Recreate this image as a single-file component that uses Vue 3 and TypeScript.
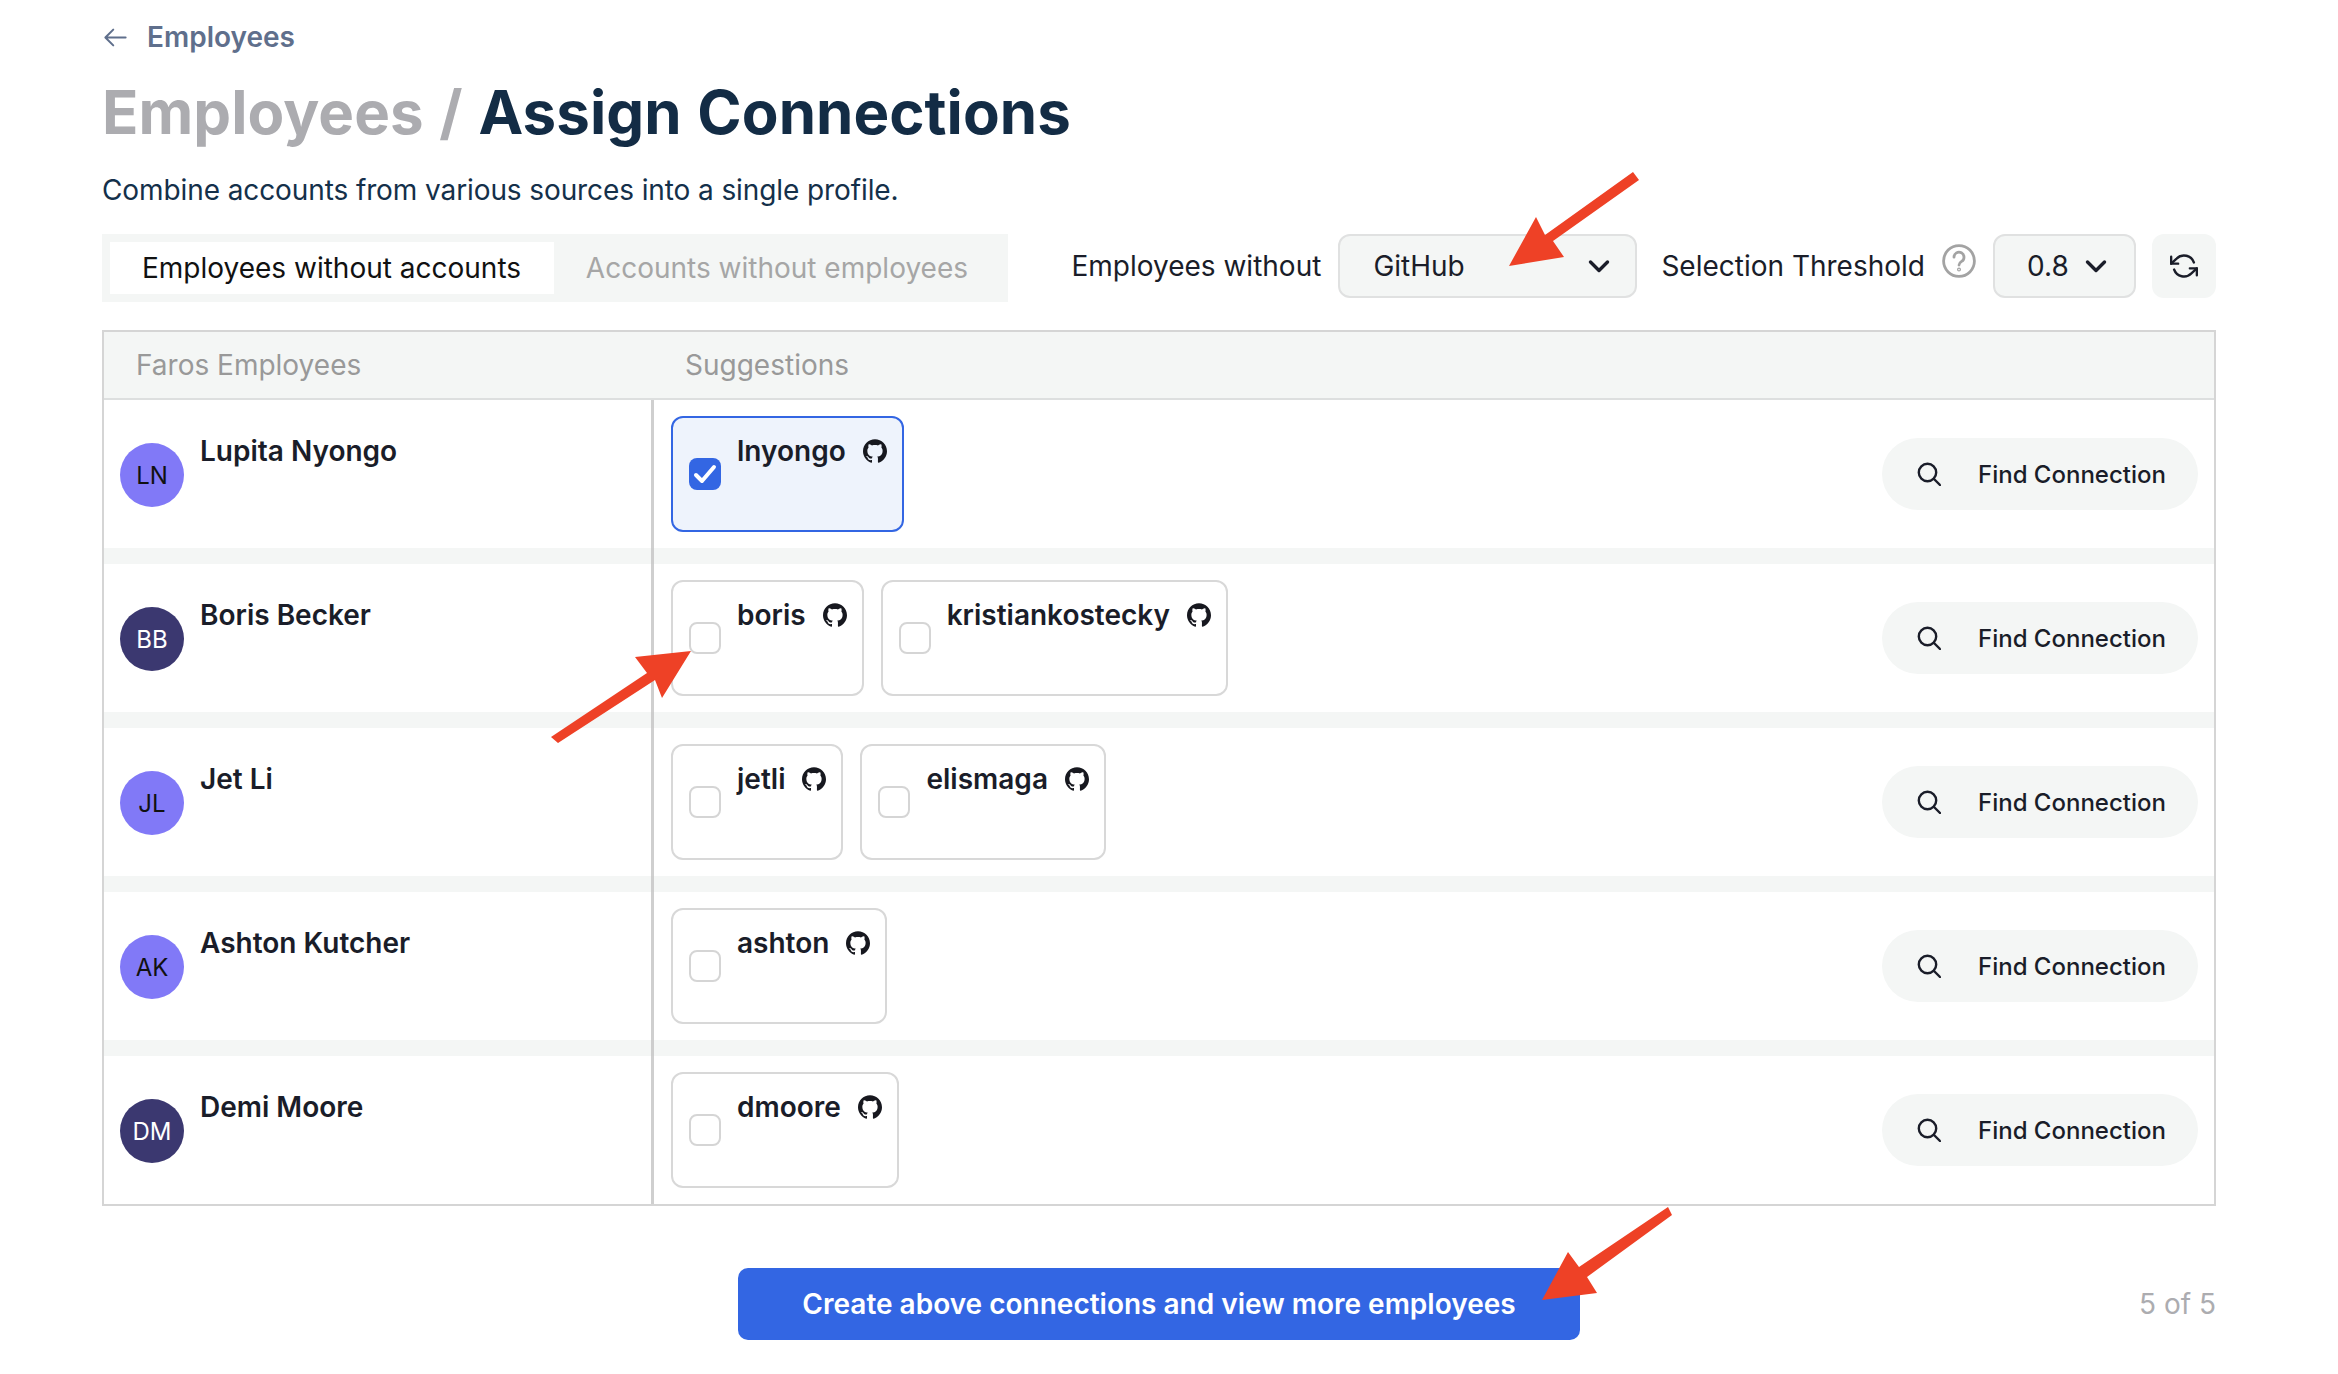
<script setup lang="ts">
interface Suggestion { name: string; checked?: boolean }
interface Employee { initials: string; name: string; dark: boolean; suggestions: Suggestion[] }

const employees: Employee[] = [
  { initials: 'LN', name: 'Lupita Nyongo', dark: false, suggestions: [{ name: 'lnyongo', checked: true }] },
  { initials: 'BB', name: 'Boris Becker', dark: true, suggestions: [{ name: 'boris' }, { name: 'kristiankostecky' }] },
  { initials: 'JL', name: 'Jet Li', dark: false, suggestions: [{ name: 'jetli' }, { name: 'elismaga' }] },
  { initials: 'AK', name: 'Ashton Kutcher', dark: false, suggestions: [{ name: 'ashton' }] },
  { initials: 'DM', name: 'Demi Moore', dark: true, suggestions: [{ name: 'dmoore' }] },
]

const github = 'M12 .297c-6.63 0-12 5.373-12 12 0 5.303 3.438 9.8 8.205 11.385.6.113.82-.258.82-.577 0-.285-.01-1.04-.015-2.04-3.338.724-4.042-1.61-4.042-1.61C4.422 18.07 3.633 17.7 3.633 17.7c-1.087-.744.084-.729.084-.729 1.205.084 1.838 1.236 1.838 1.236 1.07 1.835 2.809 1.305 3.495.998.108-.776.417-1.305.76-1.605-2.665-.3-5.466-1.332-5.466-5.93 0-1.31.465-2.38 1.235-3.22-.135-.303-.54-1.523.105-3.176 0 0 1.005-.322 3.3 1.23.96-.267 1.98-.399 3-.405 1.02.006 2.04.138 3 .405 2.28-1.552 3.285-1.23 3.285-1.23.645 1.653.24 2.873.12 3.176.765.84 1.23 1.91 1.23 3.22 0 4.61-2.805 5.625-5.475 5.92.42.36.81 1.096.81 2.22 0 1.606-.015 2.896-.015 3.286 0 .315.21.69.825.57C20.565 22.092 24 17.592 24 12.297c0-6.627-5.373-12-12-12'
</script>

<template>
  <div class="page">
    <a class="back">
      <svg class="back-icon" viewBox="0 0 24 24" fill="none" stroke="currentColor" stroke-width="1.8" stroke-linecap="round" stroke-linejoin="round"><path d="M21 12H4M10 5l-7 7 7 7" /></svg>
      <span>Employees</span>
    </a>
    <h1 class="title"><span class="crumb">Employees / </span>Assign Connections</h1>
    <p class="sub">Combine accounts from various sources into a single profile.</p>

    <div class="toolbar">
      <div class="tabs">
        <div class="tab active">Employees without accounts</div>
        <div class="tab">Accounts without employees</div>
      </div>
      <div class="controls">
        <span class="label">Employees without</span>
        <div class="select source">
          <span>GitHub</span>
          <svg class="chev" viewBox="0 0 24 24" fill="none" stroke="currentColor" stroke-width="3.4" stroke-linecap="round" stroke-linejoin="round"><path d="M3.5 8l8.5 8.5L20.500 8" /></svg>
        </div>
        <span class="label threshold">Selection Threshold</span>
        <svg class="help" viewBox="0 0 34 34" fill="none" stroke="#a3a3a3" stroke-width="2.8" stroke-linecap="round"><circle cx="17" cy="17" r="15.4" /><path d="M12 13.2a5 5 0 1 1 7.6 4.2c-1.6 1-2.6 1.9-2.6 3.6" /><circle cx="17" cy="25.6" r=".6" /></svg>
        <div class="select value">
          <span>0.8</span>
          <svg class="chev" viewBox="0 0 24 24" fill="none" stroke="currentColor" stroke-width="3.400" stroke-linecap="round" stroke-linejoin="round"><path d="M3.5 8l8.5 8.5L20.500 8" /></svg>
        </div>
        <button class="refresh">
          <svg viewBox="0 0 24 24" fill="none" stroke="currentColor" stroke-width="2" stroke-linecap="round" stroke-linejoin="round"><path d="M1 4v6h6M23 20v-6h-6" /><path d="M20.49 9A9 9 0 0 0 5.64 5.64L1 10m22 4-4.64 4.36A9 9 0 0 1 3.51 15" /></svg>
        </button>
      </div>
    </div>

    <div class="table">
      <div class="head">
        <div class="head-left">Faros Employees</div>
        <div class="head-right">Suggestions</div>
      </div>
      <div v-for="e in employees" :key="e.name" class="row">
        <div class="person">
          <div class="avatar" :class="{ dark: e.dark }">{{ e.initials }}</div>
          <div class="name">{{ e.name }}</div>
        </div>
        <div class="suggest">
          <div class="cards">
            <div v-for="s in e.suggestions" :key="s.name" class="card" :class="{ on: s.checked }">
              <div class="check">
                <svg v-if="s.checked" viewBox="0 0 32 32" fill="none" stroke="#fff" stroke-width="4" stroke-linecap="round" stroke-linejoin="round"><path d="M7 17l6 6 12-14" /></svg>
              </div>
              <div class="account">
                <span>{{ s.name }}</span>
                <svg class="gh" viewBox="0 0 24 24" fill="#17181f"><path :d="github" /></svg>
              </div>
            </div>
          </div>
          <button class="find">
            <svg viewBox="0 0 24 24" fill="none" stroke="currentColor" stroke-width="2.4" stroke-linecap="round"><circle cx="10.5" cy="10.5" r="8.7" /><path d="M17 17l6 6" /></svg>
            <span>Find Connection</span>
          </button>
        </div>
      </div>
    </div>

    <div class="footer">
      <span></span>
      <button class="create">Create above connections and view more employees</button>
      <span class="count">5 of 5</span>
    </div>

    <svg class="arrows" viewBox="0 0 2338 1374" fill="#ee4126">
      <polygon points="1633,172 1639,180 1553,241 1564,257 1509,266 1536,217 1545,235" />
      <polygon points="691,651 635,657 647,673 551,737 558,743 655,680 662,698" />
      <polygon points="1668,1207 1672,1215 1587,1277 1597,1293 1542,1300 1568,1252 1579,1267" />
    </svg>
  </div>
</template>

<style>
html, body { margin: 0; background: #fff; }
</style>

<style scoped>
.page {
  position: relative;
  box-sizing: border-box;
  width: 2338px;
  height: 1374px;
  padding: 20px 122px 0 102px;
  overflow: hidden;
  font-family: Inter, "Liberation Sans", sans-serif;
  font-size: 28px;
  color: #1a1d29;
}
.back { display: flex; align-items: center; height: 34px; color: #5f6f8c; font-weight: 600; font-size: 28px; }
.back-icon { width: 27px; height: 27px; margin-right: 18px; }
.title { margin: 18px 0 0; height: 80px; line-height: 80px; font-size: 60px; font-weight: 700; color: #132c45; letter-spacing: 0.05px; word-spacing: 1.5px; }
.crumb { color: #acacb0; }
.sub { margin: 18px 0 0; height: 40px; line-height: 40px; color: #14304a; font-size: 28px; letter-spacing: -0.1px; }
.toolbar { display: flex; justify-content: space-between; align-items: flex-start; margin-top: 24px; }
.tabs { display: flex; box-sizing: border-box; width: 906px; height: 68px; padding: 8px; background: #f4f6f5; }
.tab { display: flex; align-items: center; padding: 0 32px; color: #a6a6a6; white-space: nowrap; }
.tab.active { box-sizing: border-box; width: 444px; padding: 0 32px; background: #fff; color: #111; }
.controls { display: flex; align-items: center; height: 64px; }
.label { white-space: nowrap; }
.select { display: flex; align-items: center; box-sizing: border-box; height: 64px; border: 2px solid #e0e1e1; border-radius: 12px; background: #f4f6f5; padding: 0 0 0 32px; }
.source { width: 299px; margin-left: 17px; justify-content: space-between; padding-right: 24px; padding-left: 33px; }
.threshold { margin-left: 24px; }
.help { width: 34px; height: 34px; margin: -11px 0 0 17px; }
.value { width: 143px; margin-left: 17px; gap: 15px; }
.chev { width: 24px; height: 24px; color: #1a1d29; }
.refresh { display: flex; align-items: center; justify-content: center; width: 64px; height: 64px; margin-left: 16px; padding: 0; border: 0; border-radius: 12px; background: #f4f6f5; color: #1a1d29; }
.refresh svg { width: 28px; height: 28px; }
.table { position: relative; box-sizing: border-box; margin-top: 28px; border: 2px solid #d5d5d5; background: #f4f6f5; }
.table::after { content: ""; position: absolute; left: 547px; top: 68px; bottom: 0; width: 3px; background: rgba(195, 195, 195, 0.8); }
.head { display: flex; align-items: center; height: 68px; border-bottom: 2px solid #dddfdf; box-sizing: border-box; color: #999; font-size: 28px; }
.head-left { width: 550px; padding-left: 32px; box-sizing: border-box; }
.head-right { padding-left: 31px; }
.row { display: flex; height: 148px; background: #fff; border-bottom: 16px solid #f4f6f5; }
.row:last-child { border-bottom: 0; height: 148px; }
.person { display: flex; align-items: flex-start; box-sizing: border-box; width: 550px; padding: 34px 0 0 16px; }
.avatar { display: flex; align-items: center; justify-content: center; width: 64px; height: 64px; margin-top: 9px; border-radius: 50%; background: #8179f7; color: #111; font-size: 24px; }
.avatar.dark { background: #3b3870; color: #fff; }
.name { margin-left: 16px; line-height: 34px; font-weight: 600; }
.suggest { display: flex; flex: 1; justify-content: space-between; align-items: center; padding: 0 16px 0 17px; }
.cards { display: flex; gap: 17px; }
.card { display: flex; align-items: center; box-sizing: border-box; height: 116px; padding: 0 15px 0 16px; border: 2px solid #d8d8d8; border-radius: 12px; background: #fff; }
.card.on { border-color: #3366e3; background: #eef3fc; }
.check { box-sizing: border-box; width: 32px; height: 32px; border: 2px solid #d5d5d5; border-radius: 8px; background: #fff; }
.card.on .check { border: 0; background: #3366e3; }
.check svg { display: block; width: 32px; height: 32px; }
.account { display: flex; align-self: flex-start; align-items: center; margin: 16px 0 0 16px; height: 34px; font-weight: 600; white-space: nowrap; }
.gh { width: 24px; height: 24px; margin-left: 17px; }
.find { display: flex; align-items: center; box-sizing: border-box; width: 316px; height: 72px; padding: 0 0 0 35px; border: 0; border-radius: 36px; background: #f4f6f5; color: #1a1d29; font: 500 24px Inter, "Liberation Sans", sans-serif; }
.find svg { width: 24px; height: 24px; margin-right: 37px; }
.footer { display: grid; grid-template-columns: 1fr auto 1fr; align-items: center; margin-top: 62px; }
.create { width: 842px; height: 72px; padding: 0; border: 0; border-radius: 10px; background: #3366e3; color: #fff; font: 600 28px Inter, "Liberation Sans", sans-serif; }
.count { text-align: right; color: #acacb0; }
.arrows { position: absolute; left: 0; top: 0; width: 2338px; height: 1374px; pointer-events: none; }
</style>
